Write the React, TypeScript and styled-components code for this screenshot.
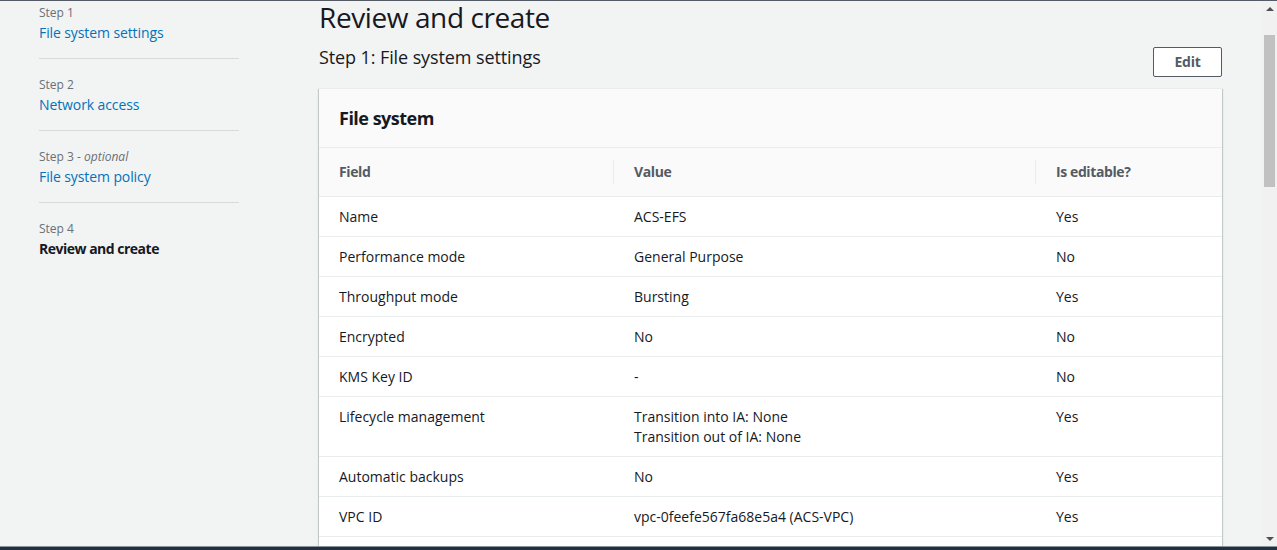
import React, { useLayoutEffect, useRef } from 'react';
import styled, { createGlobalStyle } from 'styled-components';

const Global = createGlobalStyle`
  html, body { margin: 0; padding: 0; height: 100%; overflow: hidden; }
  body {
    font-family: "Open Sans", "Noto Sans", Arial, sans-serif;
    color: #16191f;
    background: #f2f3f3;
    -webkit-font-smoothing: antialiased;
  }
  * { box-sizing: border-box; }
`;

const Frame = styled.div`
  display: flex;
  flex-direction: column;
  height: 550px;
  width: 100%;
`;

const TopEdge = styled.div`
  flex: none;
  height: 1px;
  background: #545b64;
`;

const Body = styled.div`
  flex: 1;
  min-height: 0;
  display: flex;
`;

const Scroller = styled.div`
  flex: 1;
  min-width: 0;
  overflow: hidden;
  background: #f2f3f3;
`;

const ScrollRail = styled.div`
  flex: none;
  width: 15px;
  display: flex;
  flex-direction: column;
  background: #f1f1f1;
`;

const ArrowButton = styled.div<{ $down?: boolean }>`
  flex: none;
  height: 15px;
  display: flex;
  align-items: center;
  justify-content: center;
  &::after {
    content: '';
    width: 0;
    height: 0;
    border-left: 4px solid transparent;
    border-right: 4px solid transparent;
    ${p =>
      p.$down
        ? 'border-top: 4px solid #505050;'
        : 'border-bottom: 4px solid #505050;'}
  }
`;

const Track = styled.div`
  flex: 1;
  padding: 19px 2px 0;
`;

const Thumb = styled.div`
  height: 152px;
  background: #c1c1c1;
`;

const BottomBar = styled.div`
  flex: none;
  height: 4px;
  background: #232f3e;
  border-top: 1px solid #879596;
`;

const Layout = styled.div`
  display: flex;
  align-items: flex-start;
  gap: 80px;
  padding: 54px 40px 40px 39px;
  min-height: 1846px;
`;

const Nav = styled.nav`
  flex: none;
  width: 200px;
  display: flex;
  flex-direction: column;
`;

const NavItem = styled.div`
  padding: 18px 0 14px;
  border-bottom: 1px solid #d5dbdb;
  &:last-child { border-bottom: none; }
`;

const StepLabel = styled.div`
  font-size: 12px;
  line-height: 16px;
  color: #687078;
  margin-bottom: 1px;
  em { font-style: italic; }
`;

const StepLink = styled.a<{ $active?: boolean }>`
  display: block;
  font-size: 14px;
  line-height: 22px;
  text-decoration: none;
  color: ${p => (p.$active ? '#16191f' : '#0073bb')};
  font-weight: ${p => (p.$active ? 700 : 400)};
  letter-spacing: ${p => (p.$active ? '-0.5px' : '-0.1px')};
  cursor: pointer;
`;

const Main = styled.main`
  flex: 1;
  min-width: 0;
  padding-top: 12px;
`;

const PageTitle = styled.h1`
  margin: 0;
  font-size: 28px;
  line-height: 36px;
  font-weight: 400;
  letter-spacing: -0.4px;
  color: #16191f;
`;

const SectionHeader = styled.div`
  display: flex;
  justify-content: space-between;
  align-items: flex-start;
  margin-top: 11px;
`;

const SectionTitle = styled.h2`
  margin: 0;
  font-size: 18px;
  line-height: 22px;
  font-weight: 400;
  letter-spacing: -0.1px;
  color: #16191f;
`;

const Button = styled.button`
  margin-top: 1px;
  height: 30px;
  width: 69px;
  padding: 0;
  background: #ffffff;
  border: 1px solid #545b64;
  border-radius: 2px;
  font-family: inherit;
  font-size: 14px;
  font-weight: 700;
  line-height: 20px;
  letter-spacing: -0.3px;
  color: #545b64;
  cursor: pointer;
`;

const Card = styled.section`
  margin-top: 11px;
  background: #ffffff;
  border-top: 1px solid #eaeded;
  box-shadow: 0 1px 1px 0 rgba(0, 28, 36, 0.3), 1px 1px 1px 0 rgba(0, 28, 36, 0.15),
    -1px 1px 1px 0 rgba(0, 28, 36, 0.15);
`;

const CardHeader = styled.div`
  background: #fafafa;
  padding: 18px 20px;
  border-bottom: 1px solid #eaeded;
`;

const CardTitle = styled.h3`
  margin: 0;
  font-size: 18px;
  line-height: 22px;
  font-weight: 700;
  letter-spacing: -0.5px;
  color: #16191f;
`;

const Row = styled.div<{ $head?: boolean }>`
  display: grid;
  grid-template-columns: 294px 422px 1fr;
  background: ${p => (p.$head ? '#fafafa' : '#ffffff')};
  border-bottom: 1px solid #eaeded;
`;

const HeadCell = styled.div`
  position: relative;
  padding: 14px 20px 14px 21px;
  font-size: 14px;
  line-height: 20px;
  font-weight: 700;
  letter-spacing: -0.4px;
  color: #545b64;
  &:first-child { padding-left: 20px; }
  &:not(:first-child)::before {
    content: '';
    position: absolute;
    left: 0;
    top: 12px;
    bottom: 12px;
    width: 1px;
    background: #eaeded;
  }
`;

const Cell = styled.div`
  padding: 10px 20px 9px 21px;
  font-size: 14px;
  line-height: 20px;
  color: #16191f;
  &:first-child { padding-left: 20px; }
`;

const Line = styled.div``;

type Item = { field: string; value: string[]; editable: string };

const rows: Item[] = [
  { field: 'Name', value: ['ACS-EFS'], editable: 'Yes' },
  { field: 'Performance mode', value: ['General Purpose'], editable: 'No' },
  { field: 'Throughput mode', value: ['Bursting'], editable: 'Yes' },
  { field: 'Encrypted', value: ['No'], editable: 'No' },
  { field: 'KMS Key ID', value: ['-'], editable: 'No' },
  {
    field: 'Lifecycle management',
    value: ['Transition into IA: None', 'Transition out of IA: None'],
    editable: 'Yes',
  },
  { field: 'Automatic backups', value: ['No'], editable: 'Yes' },
  { field: 'VPC ID', value: ['vpc-0feefe567fa68e5a4 (ACS-VPC)'], editable: 'Yes' },
  { field: 'Tags', value: ['-'], editable: 'Yes' },
];

const steps = [
  { label: 'Step 1', title: 'File system settings' },
  { label: 'Step 2', title: 'Network access' },
  { label: 'Step 3', optional: true, title: 'File system policy' },
  { label: 'Step 4', title: 'Review and create', active: true },
];

export default function App() {
  const scroller = useRef<HTMLDivElement>(null);

  useLayoutEffect(() => {
    if (scroller.current) scroller.current.scrollTop = 68;
  }, []);

  return (
    <>
      <Global />
      <Frame>
        <TopEdge />
        <Body>
          <Scroller ref={scroller}>
            <Layout>
              <Nav>
                {steps.map(s => (
                  <NavItem key={s.label}>
                    <StepLabel>
                      {s.label}
                      {s.optional && (
                        <>
                          {' - '}
                          <em>optional</em>
                        </>
                      )}
                    </StepLabel>
                    <StepLink $active={s.active}>{s.title}</StepLink>
                  </NavItem>
                ))}
              </Nav>
              <Main>
                <PageTitle>Review and create</PageTitle>
                <SectionHeader>
                  <SectionTitle>Step 1: File system settings</SectionTitle>
                  <Button>Edit</Button>
                </SectionHeader>
                <Card>
                  <CardHeader>
                    <CardTitle>File system</CardTitle>
                  </CardHeader>
                  <Row $head>
                    <HeadCell>Field</HeadCell>
                    <HeadCell>Value</HeadCell>
                    <HeadCell>Is editable?</HeadCell>
                  </Row>
                  {rows.map(r => (
                    <Row key={r.field}>
                      <Cell>{r.field}</Cell>
                      <Cell>
                        {r.value.map(v => (
                          <Line key={v}>{v}</Line>
                        ))}
                      </Cell>
                      <Cell>{r.editable}</Cell>
                    </Row>
                  ))}
                </Card>
              </Main>
            </Layout>
          </Scroller>
          <ScrollRail>
            <ArrowButton />
            <Track>
              <Thumb />
            </Track>
            <ArrowButton $down />
          </ScrollRail>
        </Body>
        <BottomBar />
      </Frame>
    </>
  );
}
